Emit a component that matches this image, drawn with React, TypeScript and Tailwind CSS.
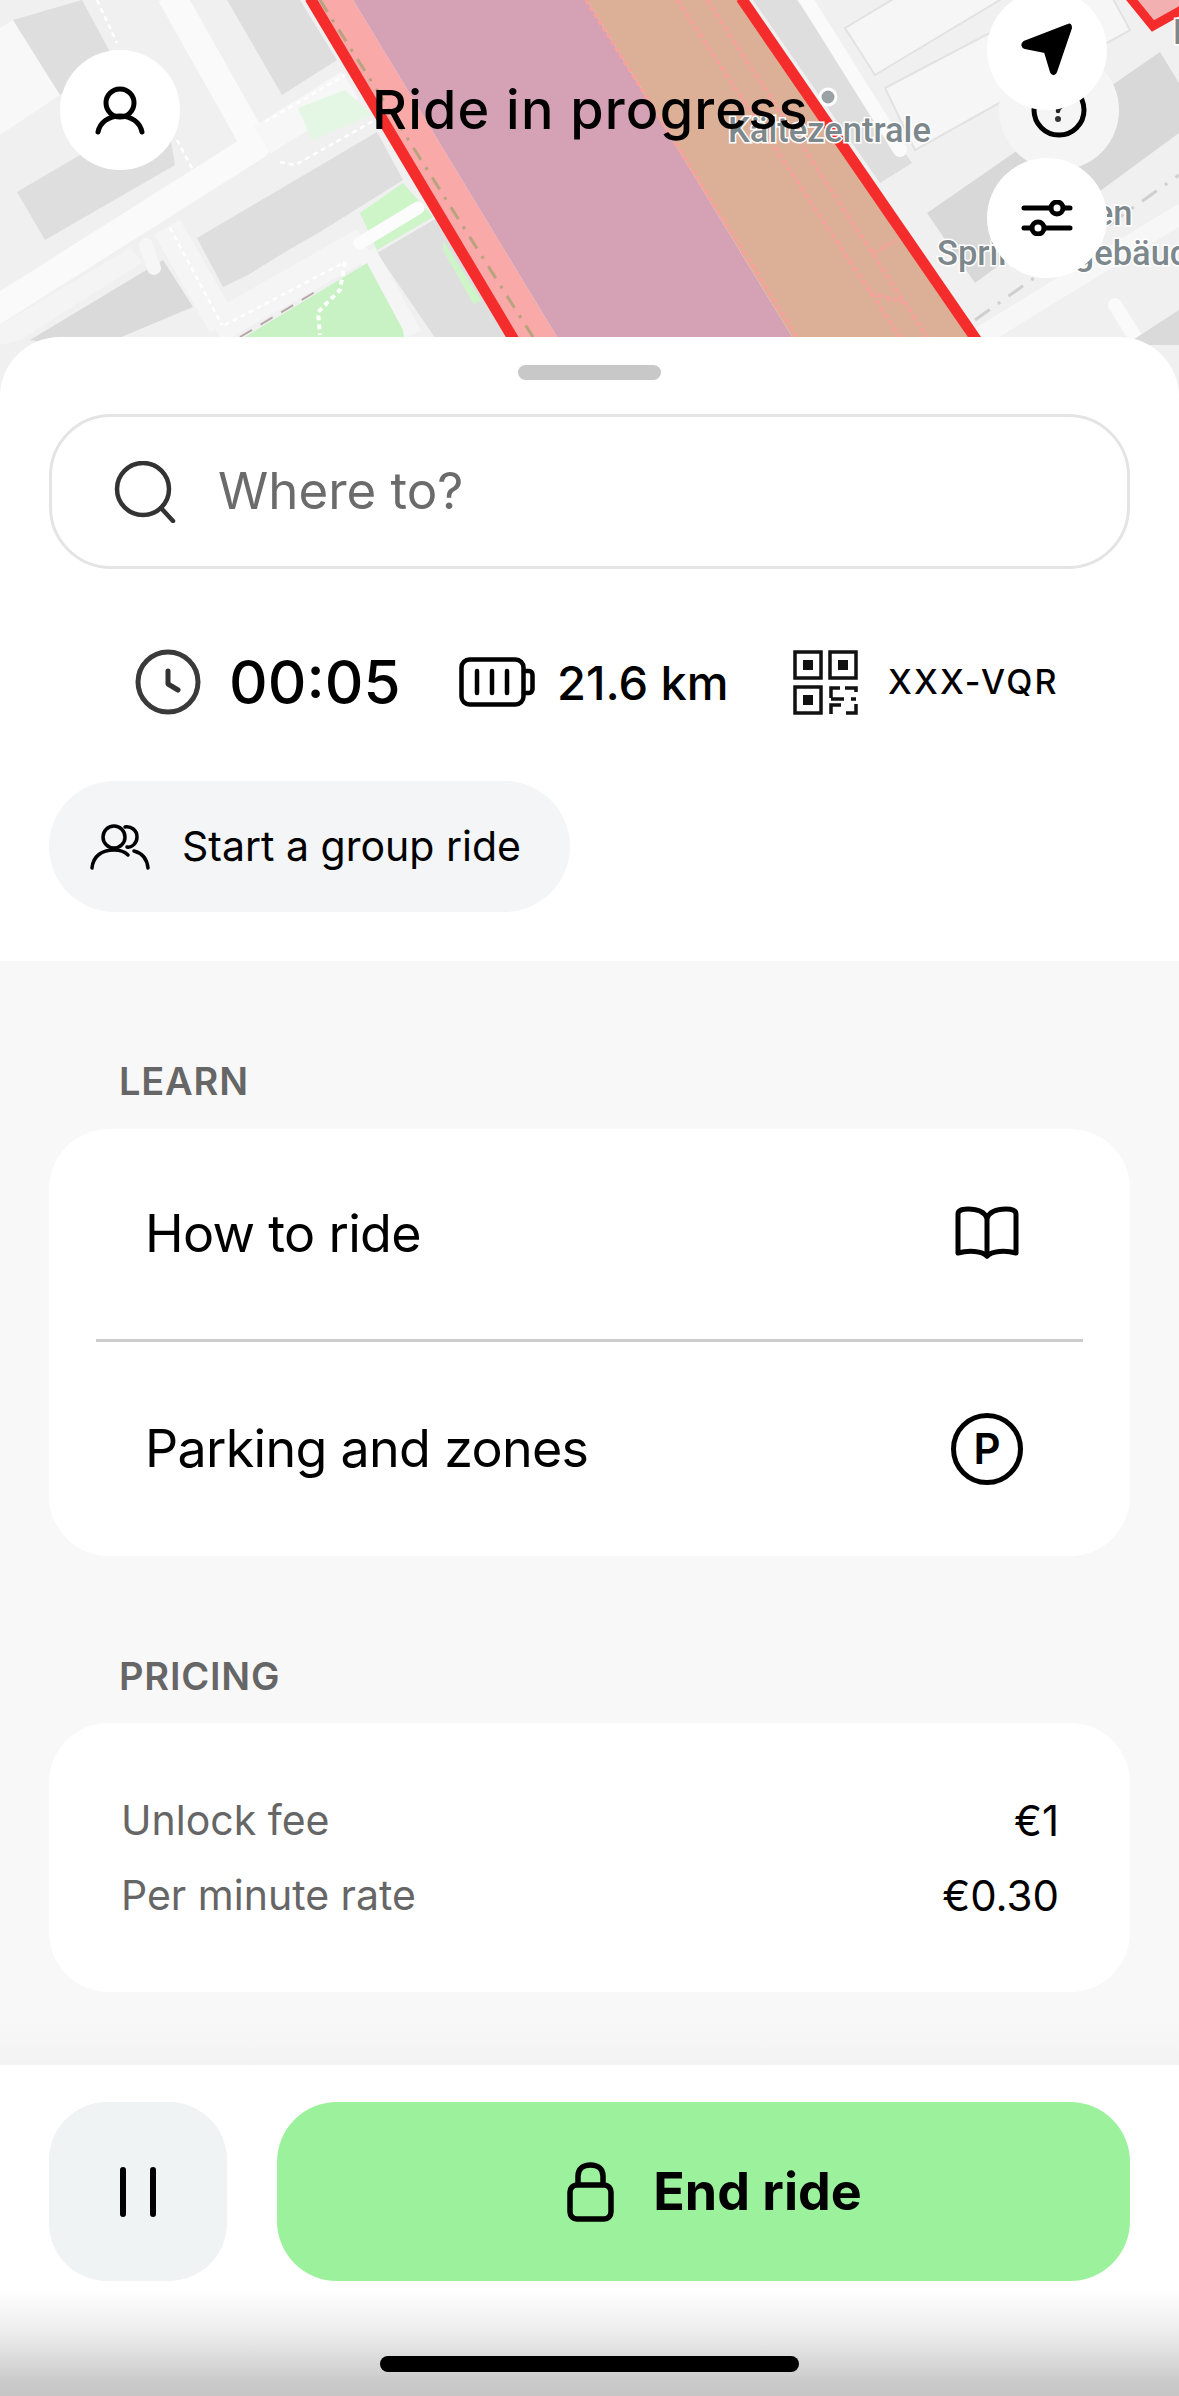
import { ReactNode } from "react";

const Map = () => (
  <svg viewBox="0 0 1179 397" className="block w-full h-[397px]">
    <rect width="1179" height="397" fill="#f0f0f0" />
    {/* left blocks */}
    <polygon points="0,28 13,20 60,95 0,135" fill="#f8f8f8" />
    <polygon points="13,20 82,0 110,52 60,95" fill="#dedede" />
    <polygon points="17,192 165,105 175,165 45,240" fill="#dedede" />
    <polygon points="227,0 300,0 337,60 282,95" fill="#dedede" />
    <polygon points="197,238 377,132 403,180 320,232 285,252 248,275 223,287" fill="#dedede" />
    <polygon points="30,340 163,260 193,307 90,350" fill="#dadada" />
    <polygon points="377,253 437,218 515,345 440,345" fill="#dedede" />
    <polygon points="0,325 130,248 143,262 20,340 0,345" fill="#f4f4f4" />
    {/* roads */}
    <polyline
      points="171,-5 256,146 -10,314"
      fill="none"
      stroke="#fafafa"
      strokeWidth="28"
      strokeLinejoin="round"
    />
    <g fill="none">
      <polyline points="262,140 350,85" strokeWidth="32" stroke="#f7f7f7" />
      <polyline points="167,227 223,325" strokeWidth="30" stroke="#f5f5f5" />
      <polyline points="215,328 365,243" strokeWidth="32" stroke="#f5f5f5" />
      <polyline points="146,245 154,268" strokeWidth="14" stroke="#f6f6f6" strokeLinecap="round" />
      <polyline points="366,252 412,335" strokeWidth="20" stroke="#f5f5f5" />
    </g>
    <polygon points="298,108 345,90 372,115 312,140" fill="#e4f7e4" />
    <polygon points="360,213 403,183 433,217 377,250" fill="#cdf5c8" />
    <polygon points="240,340 367,263 403,330 405,345 240,345" fill="#c8f2c4" />
    <polygon points="443,240 481,300 474,305 443,250" fill="#cdf5c8" />
    <line x1="360" y1="243" x2="418" y2="208" stroke="#fcfcfc" strokeWidth="13" strokeLinecap="round" />
    <g fill="none" stroke="#ffffff" strokeWidth="2.5" strokeDasharray="5 4">
      <polyline points="265,122 345,75" />
      <polyline points="280,162 295,165 375,120" />
      <polyline points="170,228 222,325" />
      <polyline points="225,325 345,262" />
      <polyline points="345,262 340,290 318,312 320,335" strokeWidth="4" />
      <polyline points="97,0 117,43" />
      <polyline points="177,140 193,170" />
    </g>
    <line x1="240" y1="337" x2="315" y2="292" stroke="#b8a8a8" strokeWidth="2" strokeDasharray="14 10" />

    {/* right blocks */}
    <polygon points="753,0 797,0 912,163 880,183" fill="#dedede" />
    <polygon points="927,213 1160,52 1179,83 1179,133 975,283" fill="#d8d8d8" />
    <g fill="#f6f6f6" stroke="#e2e2e2" strokeWidth="2">
      <polygon points="845,28 1000,-65 1100,-60 875,75" />
      <polygon points="885,88 1100,-25 1130,30 915,150" />
    </g>
    <g fill="none" stroke="#fafafa" strokeLinecap="round">
      <line x1="800" y1="-10" x2="900" y2="150" strokeWidth="14" />
      <line x1="975" y1="340" x2="1179" y2="215" strokeWidth="20" stroke="#f7f7f7" />
      <line x1="1115" y1="305" x2="1140" y2="345" strokeWidth="14" />
    </g>
    <line x1="975" y1="320" x2="1179" y2="175" stroke="#cfcfcf" strokeWidth="3" strokeDasharray="18 10 3 10" />
    <polygon points="1125,345 1179,310 1179,345" fill="#dadada" />

    {/* ride zone */}
    <polygon points="305,-2 352,-2 562,345 520,345" fill="#f8a9a8" />
    <polygon points="352,-2 586,-2 797,345 562,345" fill="#d5a1b4" />
    <polygon points="586,-2 740,-2 982,345 797,345" fill="#dcb097" />
    <g fill="none" stroke="#f6a29c" strokeWidth="4" strokeDasharray="5 3">
      <line x1="586" y1="0" x2="797" y2="337" />
      <line x1="677" y1="0" x2="900" y2="337" />
      <line x1="707" y1="0" x2="927" y2="337" />
      <line x1="873" y1="253" x2="897" y2="240" />
      <line x1="870" y1="293" x2="903" y2="302" />
    </g>
    <line x1="320" y1="0" x2="533" y2="337" stroke="#b9a27f" strokeWidth="3" strokeDasharray="14 9 3 9" />
    <line x1="310" y1="-2" x2="517" y2="345" stroke="#f42d2c" strokeWidth="11" />
    <line x1="741" y1="-2" x2="980" y2="345" stroke="#f42d2c" strokeWidth="11" />
    <polygon points="1127,-6 1153,26 1185,8 1185,-6" fill="#f2b0b0" stroke="#f42d2c" strokeWidth="9" />

    {/* labels */}
    <circle cx="828" cy="97" r="8" fill="#9aa2a6" stroke="#ffffff" strokeWidth="3" />
    <g
      fontFamily="Roboto, sans-serif"
      fontWeight="500"
      fontSize="34.5"
      fill="#7d888d"
      stroke="#ffffff"
      strokeWidth="3"
      paintOrder="stroke"
    >
      <text x="728" y="142">Kältezentrale</text>
      <text x="1006" y="225">Anlagen</text>
      <text x="937" y="265">Sprinklergebäude</text>
      <text x="1173" y="44">P</text>
    </g>
  </svg>
);

const CircleBtn = ({ className, children }: { className: string; children: ReactNode }) => (
  <div className={`absolute w-[120px] h-[120px] rounded-full flex items-center justify-center ${className}`}>
    {children}
  </div>
);

const BookIcon = () => (
  <svg width="64" height="56" viewBox="0 0 64 56" fill="none" stroke="#000" strokeWidth="5" strokeLinejoin="round" strokeLinecap="round">
    <path d="M32 50C27 45 14 44 3 47V8C3 4 8 3 13 3C22 3 29 5 32 12C35 5 42 3 51 3C56 3 61 4 61 8V47C50 44 37 45 32 50Z" />
    <path d="M32 12V50" />
  </svg>
);

const Row = ({ label, value }: { label: string; value: string }) => (
  <div className="flex justify-between items-center h-[75px]">
    <span className="text-[41px] text-[#666666]">{label}</span>
    <span className="text-[42px] text-black">{value}</span>
  </div>
);

export default function App() {
  return (
    <div
      className="relative w-[1179px] h-[2396px] overflow-hidden bg-white flex flex-col"
      style={{ fontFamily: "Inter, 'Liberation Sans', sans-serif" }}
    >
      <div className="relative h-[397px] shrink-0">
        <Map />
        <CircleBtn className="left-[60px] top-[50px] bg-white">
          <svg width="50" height="50" viewBox="0 0 50 50" fill="none" stroke="#000" strokeWidth="5" strokeLinecap="round">
            <circle cx="25" cy="18" r="14" />
            <path d="M3 47C5 37 14 31 25 31C36 31 45 37 47 47" />
          </svg>
        </CircleBtn>
        <CircleBtn className="left-[999px] top-[50px] bg-[#f5f5f5]">
          <svg width="60" height="60" viewBox="0 0 60 60" fill="none" stroke="#000" strokeWidth="5" strokeLinecap="round">
            <circle cx="30" cy="30" r="25" />
            <path d="M36 22C34 27 29 26 29 31" strokeWidth="4.5" stroke="#222" />
            <circle cx="29" cy="39" r="3" fill="#333" stroke="none" />
          </svg>
        </CircleBtn>
        <CircleBtn className="left-[987px] top-[-10px] bg-white">
          <svg width="56" height="56" viewBox="0 0 56 56">
            <path
              d="M49 3L5 20C2 22 3 25 6 26L26 30L32 50C33 53 36 53 37 50L52 6C52 3 51 2 49 3Z"
              fill="#000"
              stroke="#000"
              strokeLinejoin="round"
              strokeWidth="2"
            />
          </svg>
        </CircleBtn>
        <CircleBtn className="left-[987px] top-[158px] bg-white">
          <svg width="52" height="36" viewBox="0 0 52 36" fill="none" stroke="#000" strokeWidth="5" strokeLinecap="round">
            <path d="M3 8H49M3 28H49" />
            <circle cx="36" cy="8" r="6" fill="#fff" />
            <circle cx="17" cy="28" r="6" fill="#fff" />
          </svg>
        </CircleBtn>
        <h1 className="absolute left-[372px] top-[78px] text-[54px] leading-[64px] font-medium text-black tracking-[1.2px] whitespace-nowrap">
          Ride in progress
        </h1>
      </div>

      {/* Sheet */}
      <div className="relative -mt-[60px] flex-1 flex flex-col rounded-t-[60px] overflow-hidden bg-white">
        <div className="px-[49px] pt-[28px] pb-[49px]">
          <div className="mx-auto w-[143px] h-[15px] rounded-full bg-[#c8c8c8]" />
          <div className="mt-[34px] h-[155px] rounded-[62px] border-[3px] border-[#e4e4e4] flex items-center pl-[62px]">
            <svg width="62" height="62" viewBox="0 0 62 62" fill="none" stroke="#333" strokeWidth="4.5" strokeLinecap="round" className="shrink-0">
              <circle cx="29" cy="28" r="26" />
              <path d="M47 47L59 60" />
            </svg>
            <span className="ml-[42px] text-[51px] text-[#6b6b6b]">Where to?</span>
          </div>

          <div className="mt-[80px] h-[66px] pl-[86px] flex items-center whitespace-nowrap">
            <svg width="66" height="66" viewBox="0 0 66 66" fill="none" stroke="#3a3a3a" strokeWidth="5" strokeLinecap="round" strokeLinejoin="round" className="shrink-0">
              <circle cx="33" cy="33" r="30" />
              <path d="M33 22V35L43 41" stroke="#333" />
            </svg>
            <span className="ml-[28px] w-[168px] text-[60px] leading-none font-medium text-black">00:05</span>
            <svg width="76" height="50" viewBox="0 0 76 50" fill="none" stroke="#000" strokeWidth="4.5" strokeLinecap="round" strokeLinejoin="round" className="ml-[62px] shrink-0">
              <rect x="2.5" y="2.5" width="62" height="45" rx="8" />
              <path d="M65 14H70C72 14 73.5 15.5 73.5 18V32C73.5 34.5 72 36 70 36H65" />
              <path d="M18 14V36M33 14V36M48 14V36" />
            </svg>
            <span className="ml-[22px] w-[168px] text-[47px] leading-none font-medium text-black">21.6 km</span>
            <svg width="65" height="65" viewBox="0 0 65 65" fill="none" stroke="#111" strokeWidth="3.5" className="ml-[68px] shrink-0">
              <rect x="2" y="2" width="26" height="26" />
              <rect x="37" y="2" width="26" height="26" />
              <rect x="2" y="37" width="26" height="26" />
              <rect x="10" y="10" width="10" height="10" fill="#111" stroke="none" />
              <rect x="45" y="10" width="10" height="10" fill="#111" stroke="none" />
              <rect x="10" y="45" width="10" height="10" fill="#111" stroke="none" />
              <path d="M38 48V38H47M52 38H63V42M38 49H51M58 49H63M38 64V55H48M63 54V63H53" />
            </svg>
            <span className="ml-[30px] text-[34px] leading-none font-medium text-black tracking-[2.2px]">XXX-VQR</span>
          </div>

          <div className="mt-[66px] w-[521px] h-[131px] rounded-full bg-[#f3f5f6] flex items-center pl-[41px]">
            <svg width="60" height="46" viewBox="0 0 60 46" fill="none" stroke="#000" strokeWidth="3.5" strokeLinecap="round" className="shrink-0">
              <circle cx="24" cy="13" r="11" />
              <path d="M2 44C3 32 12 26 24 26C30 26 35 28 38 31" />
              <path d="M35 3C41 2 47 6 47 13C47 19 42 24 37 23" />
              <path d="M44 27C52 29 57 35 58 44" />
            </svg>
            <span className="ml-[32px] text-[41px] text-black whitespace-nowrap">Start a group ride</span>
          </div>
        </div>

        {/* Info sections */}
        <div className="flex-1 bg-[#f8f8f8] px-[49px] pt-[100px] bg-[linear-gradient(to_bottom,#f8f8f8_96%,#f3f3f3_100%)]">
          <div className="pl-[70px] h-[40px] leading-[40px] text-[38px] font-semibold tracking-[0.8px] text-[#666666]">LEARN</div>
          <div className="mt-[28px] bg-white rounded-[60px] h-[427px] flex flex-col px-[47px]">
            <div className="h-[210px] flex items-center justify-between pl-[49px] pr-[64px]">
              <span className="text-[52px] tracking-[-0.7px] text-black">How to ride</span>
              <BookIcon />
            </div>
            <div className="h-[3px] bg-[#cccccc]" />
            <div className="flex-1 flex items-center justify-between pl-[49px] pr-[60px]">
              <span className="text-[52px] tracking-[-0.7px] text-black">Parking and zones</span>
              <div className="w-[72px] h-[72px] rounded-full border-[5px] border-black flex items-center justify-center text-[42px] leading-none font-semibold text-black">
                P
              </div>
            </div>
          </div>

          <div className="mt-[100px] pl-[70px] h-[40px] leading-[40px] text-[38px] font-semibold tracking-[0.8px] text-[#666666]">PRICING</div>
          <div className="mt-[27px] bg-white rounded-[60px] h-[269px] pl-[72px] pr-[71px] pt-[60px]">
            <Row label="Unlock fee" value="€1" />
            <Row label="Per minute rate" value="€0.30" />
          </div>
        </div>

        {/* Bottom bar */}
        <div className="h-[331px] shrink-0 px-[49px] pt-[37px] flex flex-col bg-[linear-gradient(to_bottom,#ffffff_0%,#ffffff_68%,#eeeeee_80%,#d8d8d8_90%,#c9c9c9_96%,#c6c6c6_100%)]">
          <div className="flex gap-[50px] h-[179px]">
            <div className="w-[178px] rounded-[58px] bg-[#eff3f4] flex items-center justify-center gap-[24px]">
              <div className="w-[6px] h-[50px] rounded-full bg-black" />
              <div className="w-[6px] h-[50px] rounded-full bg-black" />
            </div>
            <div className="flex-1 rounded-[60px] bg-[#9cf29c] flex items-center justify-center gap-[39px] pl-[22px]">
              <svg width="47" height="60" viewBox="0 0 47 60" fill="none" stroke="#000" strokeWidth="5.5" strokeLinejoin="round">
                <rect x="3" y="23" width="41" height="34" rx="7" />
                <path d="M11 23V14C11 7 16 3 23.5 3C31 3 36 7 36 14V23" />
              </svg>
              <span className="text-[52px] font-bold text-black">End ride</span>
            </div>
          </div>
          <div className="mx-auto mt-[75px] w-[419px] h-[16px] rounded-full bg-black" />
        </div>
      </div>
    </div>
  );
}
